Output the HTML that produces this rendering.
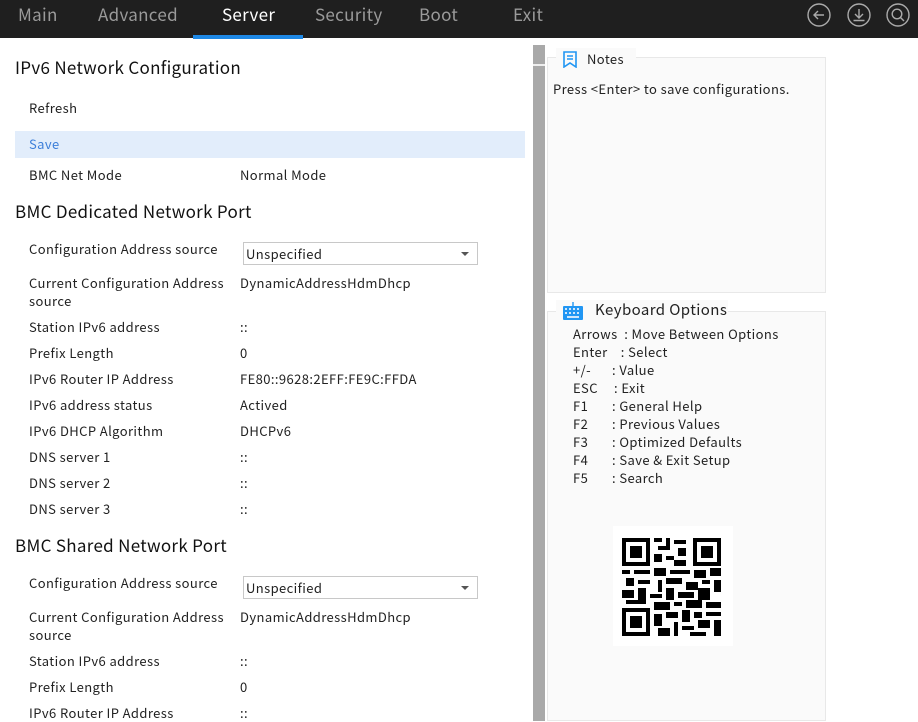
<!DOCTYPE html>
<html><head><meta charset="utf-8"><style>
*{margin:0;padding:0;box-sizing:border-box}
body{width:918px;height:721px;overflow:hidden;background:#fff;font-family:"Noto Sans CJK SC","DejaVu Sans",sans-serif;font-size:13px;color:#222;position:relative;letter-spacing:0.4px}
.top{position:absolute;left:0;top:0;width:918px;height:38px;background:#1f1f1f;letter-spacing:0.3px}
.tab{position:absolute;top:3px;font-size:17px;line-height:22px;color:#9a9a9a}
.ul{position:absolute;left:193px;top:35px;width:110px;height:4px;background:#1e88e5}
.t{position:absolute;line-height:18px;white-space:nowrap}
.h{font-size:17px;line-height:22px;color:#111;letter-spacing:0.3px}
.sel{position:absolute;width:235px;height:23px;border:1px solid #c8c8c8;background:#fff;padding-left:2px;line-height:21px}
.sel:after{content:"";position:absolute;right:8px;top:9px;border-left:4px solid transparent;border-right:4px solid transparent;border-top:4px solid #555}
.sb{position:absolute;left:533px;top:45px;width:12px;height:676px;background:#a9a9a9}
.box{position:absolute;left:547px;width:279px;border:1px solid #e8e8e8;background:#fafafa}
.k{position:absolute;line-height:18px;white-space:nowrap;font-size:13px}
</style></head><body>
<div class="top">
<div class="tab" style="left:18px">Main</div>
<div class="tab" style="left:98px">Advanced</div>
<div class="tab" style="left:222px;color:#fff">Server</div>
<div class="tab" style="left:315px">Security</div>
<div class="tab" style="left:419px">Boot</div>
<div class="tab" style="left:513px">Exit</div>
<div class="ul"></div>
<svg style="position:absolute;left:806px;top:2px" width="112" height="26" viewBox="0 0 112 26" fill="none" stroke="#aaa" stroke-width="1.4">
<circle cx="13" cy="13" r="11"/><path d="M18 13H8M12 9l-4 4 4 4"/>
<circle cx="53" cy="13" r="11"/><path d="M53 7v9M49 12l4 4 4-4M47.5 18.5h11"/>
<circle cx="92" cy="13" r="11"/><circle cx="91" cy="12" r="4.8"/><path d="M94.5 15.5l3.5 3.5"/>
</svg>
</div>
<div style="position:absolute;left:15px;top:131px;width:510px;height:27px;background:#e2edfb"></div>
<div class="t h" style="left:15px;top:56px">IPv6 Network Configuration</div>
<div class="t" style="left:29px;top:99px">Refresh</div>
<div class="t" style="left:29px;top:135px;color:#3d7fd9">Save</div>
<div class="t" style="left:29px;top:166px">BMC Net Mode</div><div class="t" style="left:240px;top:166px">Normal Mode</div>
<div class="t h" style="left:15px;top:200px">BMC Dedicated Network Port</div>
<div class="t" style="left:29px;top:240px">Configuration Address source</div>
<div class="sel" style="left:243px;top:242px">Unspecified</div>
<div class="t" style="left:29px;top:274px">Current Configuration Address<br>source</div><div class="t" style="left:240px;top:274px">DynamicAddressHdmDhcp</div>
<div class="t" style="left:29px;top:318px">Station IPv6 address</div><div class="t" style="left:240px;top:318px">::</div>
<div class="t" style="left:29px;top:344px">Prefix Length</div><div class="t" style="left:240px;top:344px">0</div>
<div class="t" style="left:29px;top:370px">IPv6 Router IP Address</div><div class="t" style="left:240px;top:370px">FE80::9628:2EFF:FE9C:FFDA</div>
<div class="t" style="left:29px;top:396px">IPv6 address status</div><div class="t" style="left:240px;top:396px">Actived</div>
<div class="t" style="left:29px;top:422px">IPv6 DHCP Algorithm</div><div class="t" style="left:240px;top:422px">DHCPv6</div>
<div class="t" style="left:29px;top:448px">DNS server 1</div><div class="t" style="left:240px;top:448px">::</div>
<div class="t" style="left:29px;top:474px">DNS server 2</div><div class="t" style="left:240px;top:474px">::</div>
<div class="t" style="left:29px;top:500px">DNS server 3</div><div class="t" style="left:240px;top:500px">::</div>
<div class="t h" style="left:15px;top:534px">BMC Shared Network Port</div>
<div class="t" style="left:29px;top:574px">Configuration Address source</div>
<div class="sel" style="left:243px;top:576px">Unspecified</div>
<div class="t" style="left:29px;top:608px">Current Configuration Address<br>source</div><div class="t" style="left:240px;top:608px">DynamicAddressHdmDhcp</div>
<div class="t" style="left:29px;top:652px">Station IPv6 address</div><div class="t" style="left:240px;top:652px">::</div>
<div class="t" style="left:29px;top:678px">Prefix Length</div><div class="t" style="left:240px;top:678px">0</div>
<div class="t" style="left:29px;top:704px">IPv6 Router IP Address</div><div class="t" style="left:240px;top:704px">::</div>
<div class="sb"></div><div style="position:absolute;left:533px;top:64px;width:12px;height:2px;background:#eee"></div>
<div class="box" style="top:57px;height:236px"></div>
<div style="position:absolute;left:556px;top:48px;width:80px;height:20px;background:#fafafa"></div>
<svg style="position:absolute;left:562px;top:51px" width="16" height="17" viewBox="0 0 16 17" fill="none" stroke="#2196f3" stroke-width="1.6"><path d="M2 1h12v15l-6-4-6 4z"/><path d="M5 5h6M5 8h6"/></svg>
<div class="k" style="left:587px;top:50px">Notes</div>
<div class="k" style="left:553px;top:80px">Press &lt;Enter&gt; to save configurations.</div>
<div class="box" style="top:311px;height:410px"></div>
<div style="position:absolute;left:556px;top:300px;width:172px;height:20px;background:#fafafa"></div>
<svg style="position:absolute;left:562px;top:302px" width="22" height="19" viewBox="0 0 22 19"><path d="M11 0v4" stroke="#2196f3" stroke-width="1.4"/><rect x="1" y="4" width="20" height="14" rx="1" fill="#2196f3"/><g fill="#cfe6fb"><rect x="3" y="6" width="2" height="2"/><rect x="7" y="6" width="2" height="2"/><rect x="11" y="6" width="2" height="2"/><rect x="15" y="6" width="2" height="2"/><rect x="3" y="10" width="2" height="2"/><rect x="7" y="10" width="2" height="2"/><rect x="11" y="10" width="2" height="2"/><rect x="15" y="10" width="2" height="2"/><rect x="5" y="14" width="12" height="2"/></g></svg>
<div class="k" style="left:595px;top:301px;font-size:15px">Keyboard Options</div>
<div class="k" style="left:573px;top:325px">Arrows&nbsp; : Move Between Options</div>
<div class="k" style="left:573px;top:343px">Enter&nbsp;&nbsp;&nbsp; : Select</div>
<div class="k" style="left:573px;top:361px">+/-</div><div class="k" style="left:612px;top:361px">: Value</div>
<div class="k" style="left:573px;top:379px">ESC</div><div class="k" style="left:614px;top:379px">: Exit</div>
<div class="k" style="left:573px;top:397px">F1</div><div class="k" style="left:612px;top:397px">: General Help</div>
<div class="k" style="left:573px;top:415px">F2</div><div class="k" style="left:612px;top:415px">: Previous Values</div>
<div class="k" style="left:573px;top:433px">F3</div><div class="k" style="left:612px;top:433px">: Optimized Defaults</div>
<div class="k" style="left:573px;top:451px">F4</div><div class="k" style="left:612px;top:451px">: Save &amp; Exit Setup</div>
<div class="k" style="left:573px;top:469px">F5</div><div class="k" style="left:612px;top:469px">: Search</div>
<svg style="position:absolute;left:613px;top:526px" width="120" height="120" viewBox="0 0 120 120">
<rect width="120" height="120" fill="#fff"/>
<g fill="#000">
<rect x="9" y="12" width="28" height="28"/><rect x="13" y="16" width="20" height="20" fill="#fff"/><rect x="17" y="20" width="12" height="12"/>
<rect x="80" y="12" width="28" height="28"/><rect x="84" y="16" width="20" height="20" fill="#fff"/><rect x="88" y="20" width="12" height="12"/>
<rect x="9" y="82" width="28" height="28"/><rect x="13" y="86" width="20" height="20" fill="#fff"/><rect x="17" y="90" width="12" height="12"/>
<rect x="41" y="12" width="8" height="4"/><rect x="53" y="12" width="4" height="8"/><rect x="61" y="14" width="12" height="4"/><rect x="45" y="20" width="12" height="4"/><rect x="65" y="22" width="8" height="8"/><rect x="41" y="28" width="8" height="8"/><rect x="53" y="30" width="8" height="4"/><rect x="61" y="34" width="12" height="6"/>
<rect x="9" y="44" width="8" height="4"/><rect x="21" y="44" width="16" height="4"/><rect x="41" y="42" width="12" height="8"/><rect x="57" y="44" width="20" height="4"/><rect x="81" y="44" width="12" height="8"/><rect x="97" y="42" width="11" height="8"/>
<rect x="13" y="52" width="8" height="8"/><rect x="25" y="54" width="12" height="4"/><rect x="45" y="54" width="4" height="12"/><rect x="53" y="52" width="16" height="6"/><rect x="73" y="56" width="12" height="8"/><rect x="89" y="54" width="8" height="4"/><rect x="101" y="54" width="7" height="12"/>
<rect x="9" y="64" width="12" height="8"/><rect x="25" y="62" width="8" height="12"/><rect x="37" y="68" width="12" height="4"/><rect x="53" y="62" width="8" height="12"/><rect x="65" y="66" width="16" height="6"/><rect x="85" y="62" width="12" height="12"/>
<rect x="13" y="74" width="20" height="4"/><rect x="41" y="76" width="16" height="8"/><rect x="61" y="76" width="8" height="4"/><rect x="73" y="74" width="16" height="8"/><rect x="93" y="76" width="15" height="6"/>
<rect x="41" y="88" width="8" height="12"/><rect x="53" y="86" width="12" height="6"/><rect x="69" y="84" width="8" height="12"/><rect x="81" y="86" width="8" height="6"/><rect x="93" y="86" width="15" height="4"/>
<rect x="45" y="102" width="12" height="8"/><rect x="61" y="96" width="4" height="14"/><rect x="69" y="100" width="12" height="4"/><rect x="85" y="94" width="12" height="8"/><rect x="101" y="94" width="7" height="16"/><rect x="77" y="106" width="16" height="4"/>
</g></svg>
</body></html>
